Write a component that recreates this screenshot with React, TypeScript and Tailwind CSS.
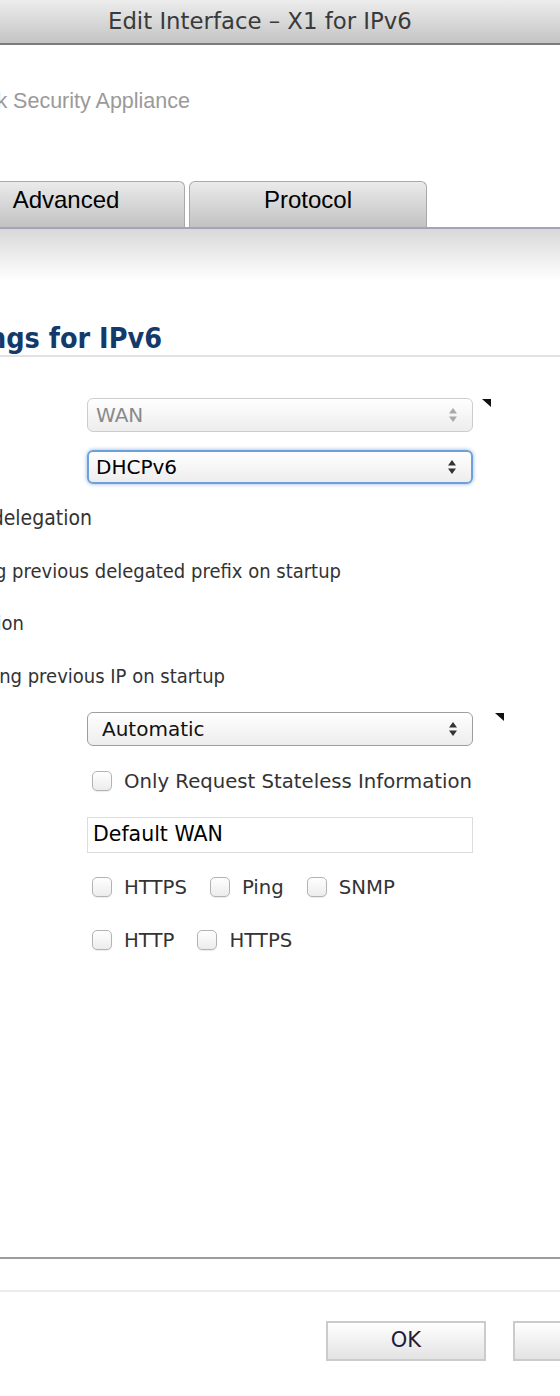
import type React from "react";

const bodyFont = "font-['DejaVu_Sans_Condensed','DejaVu_Sans',sans-serif]";
const macFont = "font-['DejaVu_Sans',sans-serif]";

const Corner: React.FC = () => (
	<svg width="9" height="8" viewBox="0 0 9 8" className="ml-[9px] mt-[1px]">
		<polygon points="0,0 9,0 9,8" fill="#111" />
	</svg>
);

const Arrows: React.FC<{ color: string }> = ({ color }) => (
	<svg width="10" height="16" viewBox="0 0 10 16">
		<polygon points="5,1 9,6.5 1,6.5" fill={color} />
		<polygon points="5,15 9,9.5 1,9.5" fill={color} />
	</svg>
);

const Select: React.FC<{
	value: string;
	disabled?: boolean;
	focused?: boolean;
	inset?: string;
}> = ({ value, disabled, focused, inset = "pl-[8px]" }) => (
	<div
		className={`w-[386px] h-[34px] shrink-0 flex items-center justify-between ${inset} pr-[14px] rounded-[6px] bg-gradient-to-b from-white to-[#ededed] text-[20px] ${macFont} ${
			disabled
				? "border border-[#cdcdcd] text-[#8a8a8a]"
				: focused
					? "border-2 border-[#6d9fd9] shadow-[0_0_4px_#8db5e6] text-black"
					: "border border-[#9e9e9e] text-[#111]"
		}`}
	>
		<span>{value}</span>
		<Arrows color={disabled ? "#a9a9a9" : "#333"} />
	</div>
);

const Box: React.FC = () => (
	<span className="w-[20px] h-[20px] rounded-[5px] border border-[#b3b3b3] bg-gradient-to-b from-white to-[#ececec] shadow-[0_1px_1px_rgba(0,0,0,0.08)] shrink-0" />
);

const Check: React.FC<{ label: string }> = ({ label }) => (
	<label className={`flex items-center gap-[12px] ${macFont} text-[19.7px]`}>
		<Box />
		<span>{label}</span>
	</label>
);

const Clipped: React.FC<{ end: string; children: React.ReactNode }> = ({
	end,
	children,
}) => (
	<div className={`${end} shrink-0 flex justify-end whitespace-nowrap`}>
		{children}
	</div>
);

export default function App() {
	return (
		<div className="w-[560px] h-[1396px] overflow-hidden bg-white flex flex-col text-[#333]">
			{/* window title bar */}
			<div className="h-[45px] shrink-0 bg-gradient-to-b from-[#ededed] to-[#c4c4c4] border-b-2 border-[#7c7c7c] flex items-center pl-[108px]">
				<span className={`${macFont} text-[22.8px] text-[#3a3a3a] whitespace-nowrap`}>
					Edit Interface – X1 for IPv6
				</span>
			</div>

			<div className="h-[38px] shrink-0" />
			<Clipped end="w-[190px]">
				<span className="font-['Liberation_Sans',sans-serif] text-[21.5px] text-[#9a9a9a] leading-[36px]">
					SonicWALL Network Security Appliance
				</span>
			</Clipped>

			{/* tabs */}
			<div className="mt-[62px] flex gap-[4px] -ml-[53px] shrink-0">
				{["Advanced", "Protocol"].map((t) => (
					<div
						key={t}
						className="w-[238px] h-[46px] shrink-0 rounded-t-[6px] border border-b-0 border-[#a9a9a9] bg-gradient-to-b from-[#ebebeb] to-[#c2c2c2] flex items-center justify-center pb-[10px] font-['Liberation_Sans',sans-serif] text-[24px] text-black"
					>
						{t}
					</div>
				))}
			</div>
			<div className="h-[2px] bg-[#a3a4b6] shrink-0" />
			<div className="h-[52px] bg-gradient-to-b from-[#d9d9d9] to-white shrink-0" />

			{/* section heading */}
			<div className="mt-[42px] border-b-2 border-[#e2e2e2] h-[34px] flex items-center shrink-0">
				<Clipped end="w-[162px]">
					<span className={`${bodyFont} font-bold text-[28.5px] text-[#133a6b]`}>
						Interface Settings for IPv6
					</span>
				</Clipped>
			</div>

			{/* form rows */}
			<div className={`mt-[32px] flex flex-col ${bodyFont} text-[20px] text-[#333]`}>
				<div className="h-[52px] flex items-center pl-[87px]">
					<Select value="WAN" disabled />
					<div className="self-start mt-[9px]">
						<Corner />
					</div>
				</div>
				<div className="h-[52px] flex items-center pl-[87px]">
					<Select value="DHCPv6" focused inset="pl-[7px]" />
				</div>
				<div className="h-[52px] flex items-center">
					<Clipped end="w-[92px]">
						<span className="text-[21px]">Request prefix delegation</span>
					</Clipped>
				</div>
				<div className="h-[52px] flex items-center">
					<Clipped end="w-[341px]">
						<span>Try renewing previous delegated prefix on startup</span>
					</Clipped>
				</div>
				<div className="h-[52px] flex items-center">
					<Clipped end="w-[24px]">
						<span>Enable Rapid Commit Option</span>
					</Clipped>
				</div>
				<div className="h-[53px] flex items-center">
					<Clipped end="w-[225px]">
						<span>Try renewing previous IP on startup</span>
					</Clipped>
				</div>
				<div className="h-[53px] flex items-center pl-[87px]">
					<Select value="Automatic" inset="pl-[14px]" />
					<div className="self-start mt-[10px] ml-[13px]">
						<Corner />
					</div>
				</div>
				<div className="h-[53px] flex items-center pl-[92px]">
					<Check label="Only Request Stateless Information" />
				</div>
				<div className="h-[53px] flex items-center pl-[87px]">
					<div
						className={`w-[386px] h-[36px] border border-[#dcdcdc] flex items-center pl-[5px] ${macFont} text-[20.5px] text-black`}
					>
						Default WAN
					</div>
				</div>
				<div className="h-[53px] flex items-center pl-[92px] gap-[23px]">
					<Check label="HTTPS" />
					<Check label="Ping" />
					<Check label="SNMP" />
				</div>
				<div className="h-[53px] flex items-center pl-[92px] gap-[23px]">
					<Check label="HTTP" />
					<Check label="HTTPS" />
				</div>
			</div>

			<div className="flex-1" />

			{/* footer */}
			<div className="h-[2px] bg-[#9c9c9c] shrink-0" />
			<div className="h-[31px] shrink-0" />
			<div className="h-[2px] bg-[#ededed] shrink-0" />
			<div className="h-[29px] shrink-0" />
			<div className="flex pl-[326px] gap-[27px] shrink-0">
				<button className="w-[160px] h-[40px] shrink-0 border-2 border-[#cbcbcb] bg-gradient-to-b from-white to-[#e3e3e3] font-['DejaVu_Sans',sans-serif] text-[21px] text-[#1d1d40]">
					OK
				</button>
				<button className="w-[160px] h-[40px] shrink-0 border-2 border-[#cbcbcb] bg-gradient-to-b from-white to-[#e3e3e3] font-['DejaVu_Sans',sans-serif] text-[21px] text-[#1d1d40] flex items-center justify-end pr-[16px]">
					Cancel
				</button>
			</div>
			<div className="h-[35px] shrink-0" />
		</div>
	);
}
